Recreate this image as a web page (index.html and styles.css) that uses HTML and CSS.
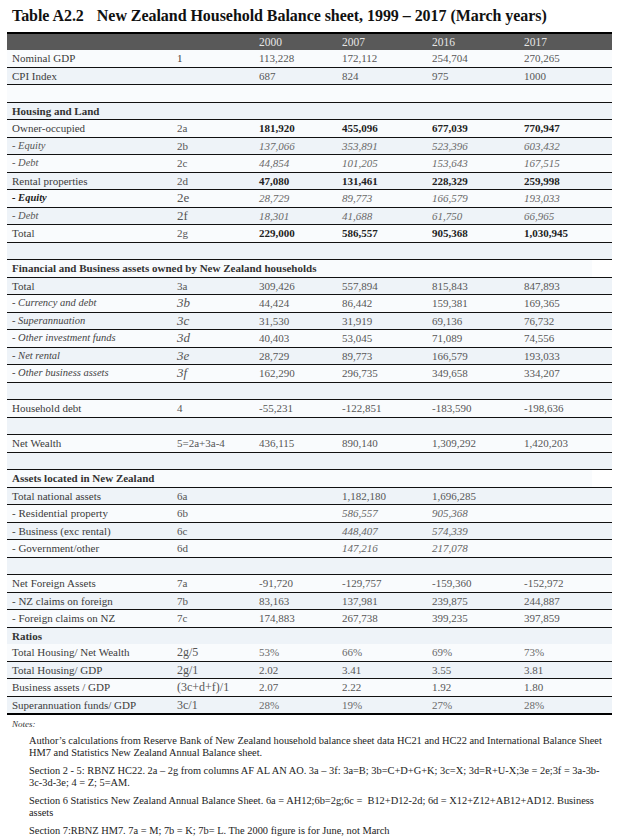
FILE: index.html
```html
<!DOCTYPE html>
<html lang="en">
<head>
<meta charset="utf-8">
<title>Table A2.2</title>
<link rel="stylesheet" href="styles.css">
</head>
<body>
<div class="page">
  <h1 class="title"><span class="tnum">Table A2.2</span>New Zealand Household Balance sheet, 1999 – 2017 (March years)</h1>
  <table class="bs">
    <colgroup>
      <col class="c-label"><col class="c-code"><col class="c-y"><col class="c-y2"><col class="c-y3"><col class="c-y4">
    </colgroup>
    <thead>
      <tr class="head"><th></th><th></th><th>2000</th><th>2007</th><th>2016</th><th>2017</th></tr>
    </thead>
    <tbody>
      <tr><td>Nominal GDP</td><td>1</td><td class="v">113,228</td><td class="v">172,112</td><td class="v">254,704</td><td class="v">270,265</td></tr>
      <tr><td>CPI Index</td><td></td><td class="v">687</td><td class="v">824</td><td class="v">975</td><td class="v">1000</td></tr>
      <tr class="blank"><td colspan="6"></td></tr>
      <tr class="sec"><td colspan="6">Housing and Land</td></tr>
      <tr><td>Owner-occupied</td><td class="cd">2a</td><td class="b">181,920</td><td class="b">455,096</td><td class="b">677,039</td><td class="b">770,947</td></tr>
      <tr class="it"><td>- Equity</td><td class="cd">2b</td><td class="v">137,066</td><td class="v">353,891</td><td class="v">523,396</td><td class="v">603,432</td></tr>
      <tr class="it"><td>- Debt</td><td class="cd">2c</td><td class="v">44,854</td><td class="v">101,205</td><td class="v">153,643</td><td class="v">167,515</td></tr>
      <tr><td>Rental properties</td><td class="cd">2d</td><td class="b">47,080</td><td class="b">131,461</td><td class="b">228,329</td><td class="b">259,998</td></tr>
      <tr class="it"><td class="strong">- Equity</td><td class="cd big">2e</td><td class="v">28,729</td><td class="v">89,773</td><td class="v">166,579</td><td class="v">193,033</td></tr>
      <tr class="it"><td>- Debt</td><td class="cd big">2f</td><td class="v">18,301</td><td class="v">41,688</td><td class="v">61,750</td><td class="v">66,965</td></tr>
      <tr><td>Total</td><td class="cd">2g</td><td class="b">229,000</td><td class="b">586,557</td><td class="b">905,368</td><td class="b">1,030,945</td></tr>
      <tr class="blank"><td colspan="6"></td></tr>
      <tr class="sec"><td colspan="6">Financial and Business assets owned by New Zealand households</td></tr>
      <tr><td>Total</td><td class="cd">3a</td><td class="v">309,426</td><td class="v">557,894</td><td class="v">815,843</td><td class="v">847,893</td></tr>
      <tr class="itl"><td>- Currency and debt</td><td class="cd big">3b</td><td class="v">44,424</td><td class="v">86,442</td><td class="v">159,381</td><td class="v">169,365</td></tr>
      <tr class="itl"><td>- Superannuation</td><td class="cd big">3c</td><td class="v">31,530</td><td class="v">31,919</td><td class="v">69,136</td><td class="v">76,732</td></tr>
      <tr class="itl"><td>- Other investment funds</td><td class="cd big">3d</td><td class="v">40,403</td><td class="v">53,045</td><td class="v">71,089</td><td class="v">74,556</td></tr>
      <tr class="itl"><td>- Net rental</td><td class="cd big">3e</td><td class="v">28,729</td><td class="v">89,773</td><td class="v">166,579</td><td class="v">193,033</td></tr>
      <tr class="itl"><td>- Other business assets</td><td class="cd big">3f</td><td class="v">162,290</td><td class="v">296,735</td><td class="v">349,658</td><td class="v">334,207</td></tr>
      <tr class="blank"><td colspan="6"></td></tr>
      <tr><td>Household debt</td><td class="cd">4</td><td class="v">-55,231</td><td class="v">-122,851</td><td class="v">-183,590</td><td class="v">-198,636</td></tr>
      <tr class="blank"><td colspan="6"></td></tr>
      <tr><td>Net Wealth</td><td class="cd">5=2a+3a-4</td><td class="v">436,115</td><td class="v">890,140</td><td class="v">1,309,292</td><td class="v">1,420,203</td></tr>
      <tr class="blank"><td colspan="6"></td></tr>
      <tr class="sec"><td colspan="6">Assets located in New Zealand</td></tr>
      <tr><td>Total national assets</td><td class="cd">6a</td><td></td><td class="v">1,182,180</td><td class="v">1,696,285</td><td></td></tr>
      <tr><td>- Residential property</td><td class="cd">6b</td><td></td><td class="v iv">586,557</td><td class="v iv">905,368</td><td></td></tr>
      <tr><td>- Business (exc rental)</td><td class="cd">6c</td><td></td><td class="v iv">448,407</td><td class="v iv">574,339</td><td></td></tr>
      <tr><td>- Government/other</td><td class="cd">6d</td><td></td><td class="v iv">147,216</td><td class="v iv">217,078</td><td></td></tr>
      <tr class="blank"><td colspan="6"></td></tr>
      <tr><td>Net Foreign Assets</td><td class="cd">7a</td><td class="v">-91,720</td><td class="v">-129,757</td><td class="v">-159,360</td><td class="v">-152,972</td></tr>
      <tr><td>- NZ claims on foreign</td><td class="cd">7b</td><td class="v">83,163</td><td class="v">137,981</td><td class="v">239,875</td><td class="v">244,887</td></tr>
      <tr><td>- Foreign claims on NZ</td><td class="cd">7c</td><td class="v">174,883</td><td class="v">267,738</td><td class="v">399,235</td><td class="v">397,859</td></tr>
      <tr class="sec noline"><td colspan="6">Ratios</td></tr>
      <tr><td>Total Housing/ Net Wealth</td><td class="cd med">2g/5</td><td class="v lt">53%</td><td class="v lt">66%</td><td class="v lt">69%</td><td class="v lt">73%</td></tr>
      <tr><td>Total Housing/ GDP</td><td class="cd med">2g/1</td><td class="v">2.02</td><td class="v">3.41</td><td class="v">3.55</td><td class="v">3.81</td></tr>
      <tr><td>Business assets / GDP</td><td class="cd med">(3c+d+f)/1</td><td class="v">2.07</td><td class="v">2.22</td><td class="v">1.92</td><td class="v">1.80</td></tr>
      <tr class="last"><td>Superannuation funds/ GDP</td><td class="cd med">3c/1</td><td class="v lt">28%</td><td class="v lt">19%</td><td class="v lt">27%</td><td class="v lt">28%</td></tr>
    </tbody>
  </table>
  <div class="notes">
    <p class="notes-h">Notes:</p>
    <p>Author’s calculations from Reserve Bank of New Zealand household balance sheet data HC21 and HC22 and International Balance Sheet HM7 and Statistics New Zealand Annual Balance sheet.</p>
    <p>Section 2 - 5: RBNZ HC22. 2a – 2g from columns AF AL AN AO. 3a – 3f: 3a=B; 3b=C+D+G+K; 3c=X; 3d=R+U-X;3e = 2e;3f = 3a-3b-3c-3d-3e; 4 = Z; 5=AM.</p>
    <p>Section 6 Statistics New Zealand Annual Balance Sheet. 6a = AH12;6b=2g;6c =&nbsp; B12+D12-2d; 6d = X12+Z12+AB12+AD12. Business assets</p>
    <p>Section 7:RBNZ HM7. 7a = M; 7b = K; 7b= L. The 2000 figure is for June, not March</p>
  </div>
</div>
</body>
</html>
```

FILE: styles.css
```css
html, body {
  margin: 0;
  padding: 0;
  background: #ffffff;
}

.page {
  width: 617px;
  padding: 6px 5px 0 7px;
  box-sizing: border-box;
  font-family: "Liberation Serif", "DejaVu Serif", serif;
  color: #3c3c3c;
}

.title {
  margin: 0 0 6px 5px;
  font-size: 16px;
  line-height: 20px;
  font-weight: bold;
  color: #111;
  letter-spacing: -0.05px;
  white-space: nowrap;
}

.tnum {
  margin-right: 13px;
}

.bs {
  width: 605px;
  table-layout: fixed;
  border-collapse: separate;
  border-spacing: 0;
  font-size: 11px;
}

.c-label { width: 165px; }
.c-code { width: 82px; }
.c-y { width: 83px; }
.c-y2 { width: 90px; }
.c-y3 { width: 92px; }
.c-y4 { width: 93px; }

.bs th {
  background: #595959;
  color: #e6e6e6;
  font-weight: normal;
  text-align: left;
  font-size: 11.5px;
  height: 16px;
  padding: 0 0 0 5px;
  border-top: 2px solid #000;
  line-height: 16px;
}

.bs td {
  height: 16.5px;
  padding: 0 0 0 5px;
  border-bottom: 1px solid #111;
  line-height: 16px;
  white-space: nowrap;
  vertical-align: middle;
}

.bs tbody tr:nth-child(odd) td { background: #f9fbfd; }
.bs tbody tr:nth-child(even) td { background: #eef3f8; }

.bs tbody tr.sec td {
  font-weight: bold;
  color: #333;
  background: linear-gradient(to right, #f9fbfd 0, #f9fbfd 585px, #ffffff 585px);
}
.bs tbody tr.sec:nth-child(even) td {
  background: #eef3f8;
}

.bs tr.noline td { border-bottom: none; }
.bs tr.last td { border-bottom: 2px solid #000; }

.v { color: #575757; }
.b { font-weight: bold; color: #222; }
.lt { color: #6a6a6a; }
.cd { color: #555; }
.big { font-size: 13px; }
.med { font-size: 12px; }

.it td:first-child { font-style: italic; color: #555; font-size: 10.5px; }
.it td.v { font-style: italic; color: #6a6a6a; }
.it td.strong { font-weight: bold; color: #222; }

.itl td:first-child { font-style: italic; color: #444; font-size: 10.5px; }
.itl td.cd { font-style: italic; }

.iv { font-style: italic; color: #666; }

.notes {
  margin-top: 3px;
  font-size: 10.4px;
  line-height: 12px;
  color: #222;
}

.notes p {
  margin: 0 3px 6px 22px;
}

.notes p.notes-h {
  margin: 0 0 5px 5px;
  font-style: italic;
  font-size: 9px;
  color: #333;
}
```
